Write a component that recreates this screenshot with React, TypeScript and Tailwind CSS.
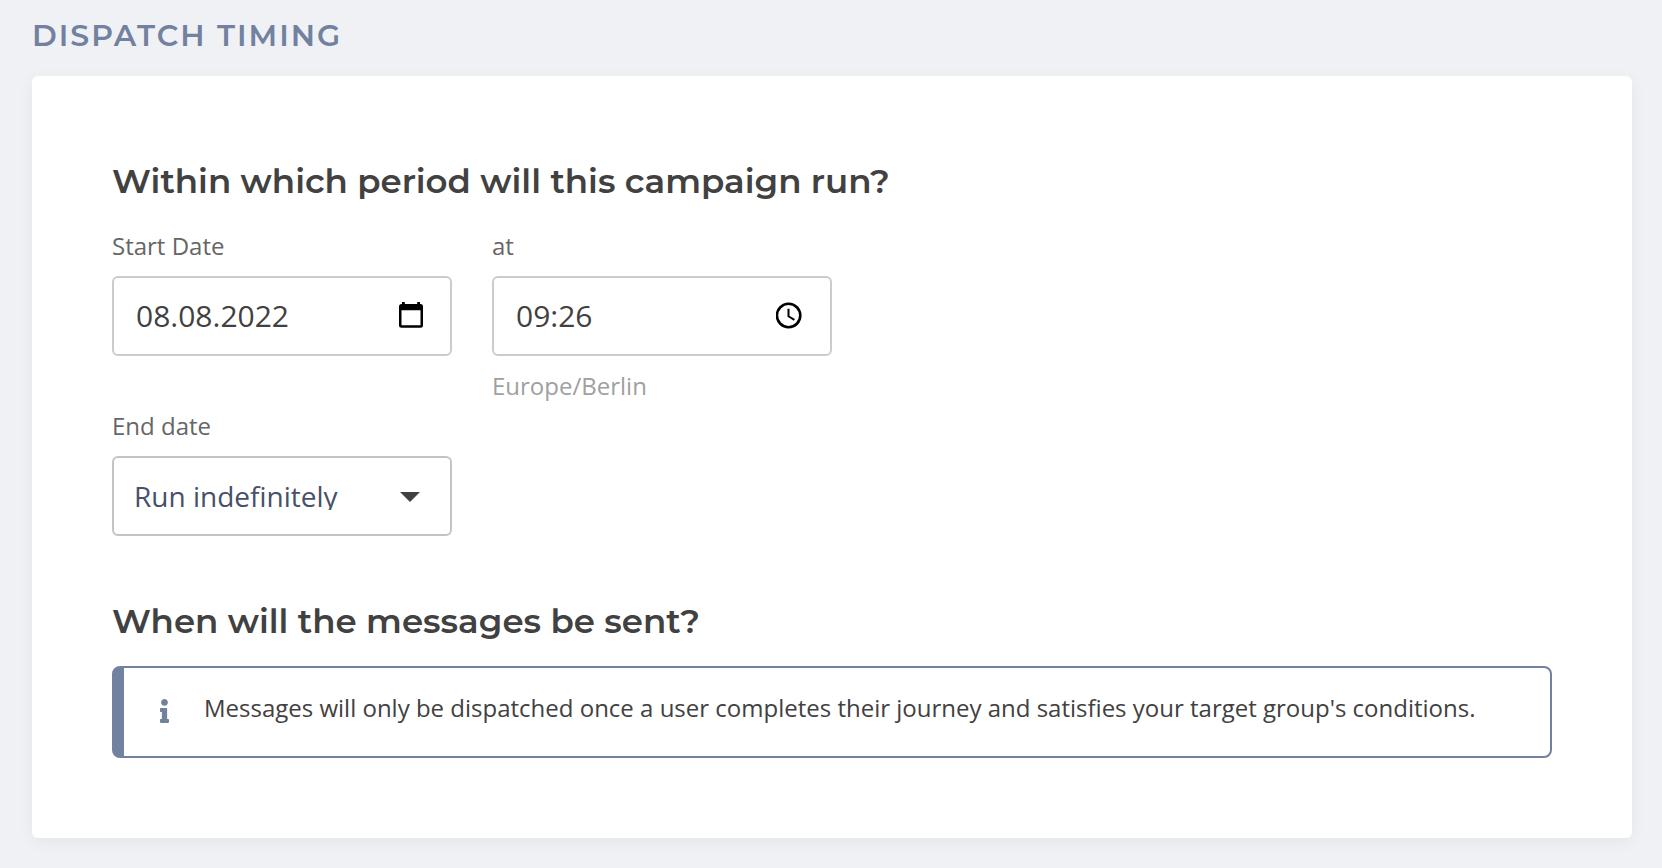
import React, { useState } from 'react';
import { FaInfo } from 'react-icons/fa';

interface FieldProps {
  id: string;
  label: string;
  hint?: string;
  children: React.ReactNode;
}

const Field: React.FC<FieldProps> = ({ id, label, hint, children }) => (
  <div className="w-[340px]">
    <label htmlFor={id} className="mb-3 block text-2xl leading-9 text-[#666666]">
      {label}
    </label>
    {children}
    {hint && <p className="mt-3 text-2xl leading-9 text-[#a0a0a0]">{hint}</p>}
  </div>
);

const CalendarIcon = () => (
  <svg viewBox="-3 -1 30 30" className="size-[30px]" fill="currentColor" aria-hidden="true">
    <path
      fillRule="evenodd"
      d="M3 0h2.8v2h12.4V0H21v2h.5A2.5 2.5 0 0 1 24 4.500v18.800a2.500 2.500 0 0 1-2.500 2.500h-19A2.500 2.500 0 0 1 0 23.300V4.500A2.500 2.500 0 0 1 2.500 2H3zM2.500 8.200v15h19v-15z"
    />
  </svg>
);

const ClockIcon = () => (
  <svg viewBox="0.4 -1.5 30 30" className="size-[30px]" fill="none" stroke="currentColor" aria-hidden="true">
    <circle cx="13" cy="13" r="11.7" strokeWidth="2.6" />
    <path d="M12.9 6.300v7.500l5.900 3.500" strokeWidth="2" />
  </svg>
);

interface PickerInputProps {
  id: string;
  value: string;
  onChange: (value: string) => void;
  buttonLabel: string;
  icon: React.ReactNode;
}

const PickerInput: React.FC<PickerInputProps> = ({ id, value, onChange, buttonLabel, icon }) => (
  <div className="flex h-20 items-center rounded-md border-2 border-[#cccccc] bg-white pr-6 pl-[22px]">
    <input
      id={id}
      type="text"
      value={value}
      onChange={(e) => onChange(e.target.value)}
      className="h-full min-w-0 flex-1 bg-transparent pb-0.5 text-3xl text-[#414141] outline-none"
    />
    <button type="button" aria-label={buttonLabel} className="flex text-black">
      {icon}
    </button>
  </div>
);

export default function App() {
  const [startDate, setStartDate] = useState('08.08.2022');
  const [startTime, setStartTime] = useState('09:26');

  return (
    <main className="min-h-screen bg-[#f0f1f5] pt-3 pr-[30px] pb-[30px] pl-8 font-['Open_Sans',sans-serif]">
      <h1 className="mb-4 font-[Montserrat,sans-serif] text-3xl leading-12 font-semibold tracking-[2px] text-[#7281a0] uppercase">
        Dispatch timing
      </h1>

      <form className="rounded-md bg-white p-20 shadow-[0_4px_16px_rgba(0,0,0,0.05)]">
        {/* Campaign period */}
        <section>
          <h2 className="mb-[22px] font-[Montserrat,sans-serif] text-[34px] leading-[50px] font-semibold text-[#414141]">
            Within which period will this campaign run?
          </h2>
          <div className="flex flex-wrap gap-x-10">
            <Field id="start-date" label="Start Date">
              <PickerInput
                id="start-date"
                value={startDate}
                onChange={setStartDate}
                buttonLabel="Open calendar"
                icon={<CalendarIcon />}
              />
            </Field>
            <Field id="start-time" label="at" hint="Europe/Berlin">
              <PickerInput
                id="start-time"
                value={startTime}
                onChange={setStartTime}
                buttonLabel="Open time picker"
                icon={<ClockIcon />}
              />
            </Field>
          </div>
          <div className="mt-1">
            <Field id="end-date" label="End date">
              <div className="relative">
                <select
                  id="end-date"
                  className="block h-20 w-full appearance-none rounded-md border-2 border-[#c4c4c4] bg-white py-6 pr-16 pl-5 text-[28px] leading-7 text-[#475069]"
                >
                  <option>Run indefinitely</option>
                </select>
                <svg
                  viewBox="0 -2 20 12"
                  className="pointer-events-none absolute inset-y-0 right-8 my-auto h-3 w-5 text-[#414141]"
                  fill="currentColor"
                  aria-hidden="true"
                >
                  <path d="M0 0h20L10 10z" />
                </svg>
              </div>
            </Field>
          </div>
        </section>

        {/* Send time */}
        <section className="mt-[60px]">
          <h2 className="mb-5 font-[Montserrat,sans-serif] text-[34px] leading-[50px] font-semibold text-[#414141]">
            When will the messages be sent?
          </h2>
          <div className="flex rounded-lg border-2 border-l-12 border-[#7281a0] pt-[22px] pr-16 pb-[30px] pl-9">
            <FaInfo className="mt-[9px] mr-[35px] h-6 w-[9px] shrink-0 text-[#7281a0]" aria-hidden="true" />
            <p className="text-2xl leading-9 text-[#414141]">
              Messages will only be dispatched once a user completes their journey and satisfies your target group's
              conditions.
            </p>
          </div>
        </section>
      </form>
    </main>
  );
}
